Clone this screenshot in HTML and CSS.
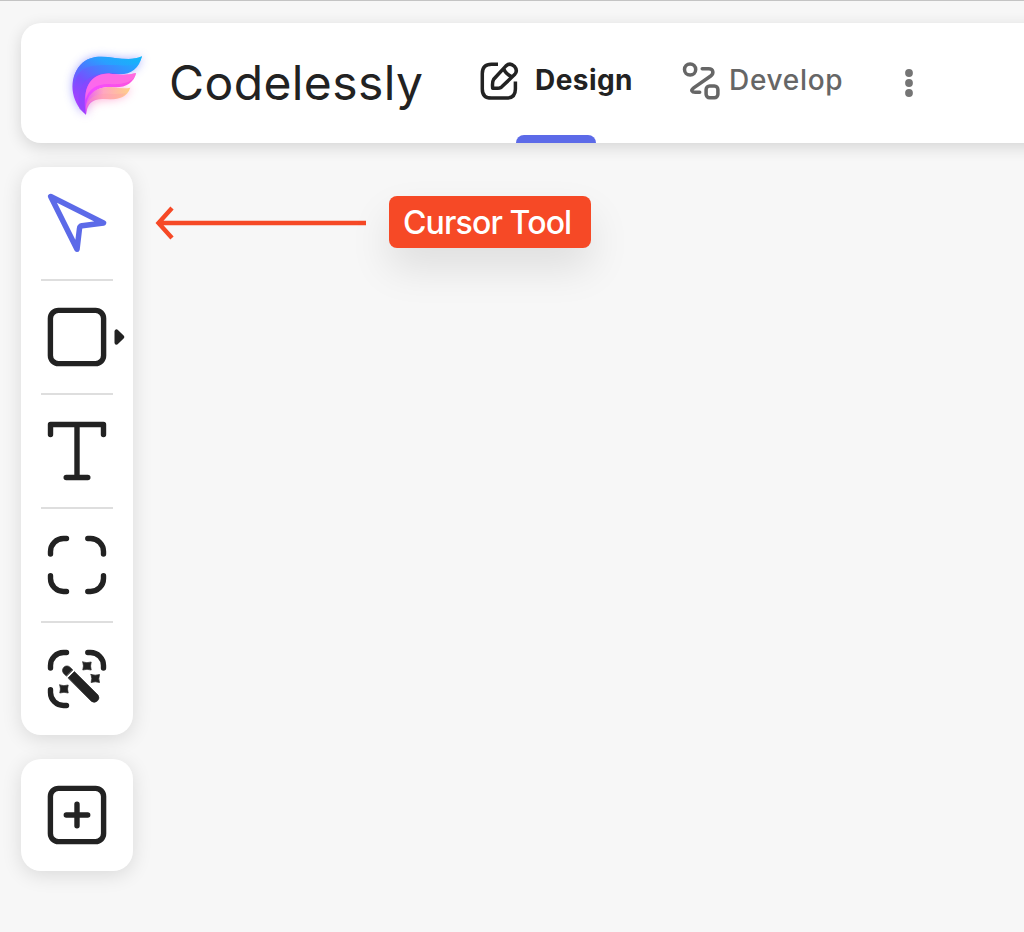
FILE: index.html
```html
<!DOCTYPE html>
<html lang="en">
<head>
<meta charset="utf-8">
<title>Codelessly</title>
<link rel="stylesheet" href="styles.css">
</head>
<body>
<header class="topbar">
  <svg class="logo" width="120" height="120" viewBox="0 0 360 360">
    <defs>
      <linearGradient id="blue" x1="0.9" y1="0" x2="0.1" y2="1"><stop offset="0" stop-color="#17b4ff"/><stop offset=".38" stop-color="#477cff"/><stop offset=".62" stop-color="#7650ff"/><stop offset="1" stop-color="#b83cff"/></linearGradient>
      <linearGradient id="sky" x1="0" y1="1" x2="1" y2="0"><stop offset="0" stop-color="#8a4cff"/><stop offset=".4" stop-color="#4b78ff"/><stop offset=".65" stop-color="#25a5ff"/><stop offset="1" stop-color="#12b8f5"/></linearGradient>
      <linearGradient id="pink" x1="0" y1="1" x2="1" y2="0"><stop offset="0" stop-color="#b941ff"/><stop offset=".4" stop-color="#f54dff"/><stop offset="1" stop-color="#ff54d4"/></linearGradient>
      <linearGradient id="peach" x1="0" y1="0" x2="1" y2="0"><stop offset="0" stop-color="#e75cf0"/><stop offset=".4" stop-color="#ffa7c0"/><stop offset="1" stop-color="#ffd088"/></linearGradient>
      <filter id="glow" x="-30%" y="-30%" width="160%" height="160%"><feGaussianBlur stdDeviation="14"/></filter>
    </defs>
    <g transform="translate(0 21)">
      <g filter="url(#glow)" opacity=".5">
        <path d="M108 254C60 215 55 145 91 105C139 51 220 106 276 79C267 116 244 133 210 133C160 130 110 150 108 254Z" fill="#5c60ff"/>
        <path d="M108 254C103 190 135 161 241 173C227 211 185 207 145 211Q115 219 108 254Z" fill="#ff67b0"/>
      </g>
      <path d="M108 254C60 215 55 145 91 105C139 51 220 106 276 79C267 116 244 133 210 133C160 130 110 150 108 254Z" fill="url(#blue)"/>
      <path d="M73 183C72 123 105 108 145 106C205 103 241 112 264 98Q274 90 276 79C220 106 139 51 91 105C71 128 66 155 73 183Z" fill="url(#sky)" opacity=".8"/>
      <path d="M88 236C80 184 96 145 142 134Q177 125 210 133C160 130 107 150 108 254Z" fill="#8d45ff" opacity=".55"/>
      <path d="M108 254C93 169 127 128 181 131Q229 138 258 129C252 161 221 176 184 171C133 169 112 198 108 254Z" fill="url(#pink)"/>
      <path d="M107 210C114 174 146 160 181 162C218 165 239 155 249 148Q257 139 258 129Q229 138 181 131C132 128 103 162 107 210Z" fill="#ff78e4" opacity=".65"/>
      <path d="M107 240C107 190 140 170 184 171Q219 177 241 173C229 206 202 209 165 207C127 205 112 220 108 254Z" fill="url(#peach)"/>
      <path d="M108 230C114 202 140 190 169 191Q207 194 228 190C208 211 185 208 162 207C127 205 113 216 108 239Z" fill="#ff9ea9" opacity=".35"/>
    </g>
  </svg>
  <span class="brand">Codelessly</span>
  <nav class="tabs">
    <a class="tab active">
      <svg class="tab-icon" width="40" height="40" viewBox="0 0 40 40" fill="none" stroke="#222" stroke-width="3.5">
        <path d="M18 3.3H11.5Q2.3 3.3 2.3 12.5V27.9Q2.3 37.1 11.5 37.1H26.2Q35.4 37.1 35.4 27.9V20.5"/>
        <path d="M26 4.9Q30 1.3 34.3 5.2Q38.2 9.7 34.6 13.6L21.5 26.1Q19.5 27.7 12.7 27.2Q12 20.7 13.7 18.2ZM23.5 7.7Q26 13.7 32 15.8" stroke-linejoin="round"/>
      </svg>
      <span class="label design">Design</span>
    </a>
    <a class="tab">
      <svg class="tab-icon" width="40" height="40" viewBox="0.8 0.5 40 40" fill="none" stroke="#666" stroke-width="3.5">
        <circle cx="8.9" cy="9" r="5.6"/>
        <path d="M21 8.2H27.5C32.2 8.2 33 12.8 29.5 15.5L12.5 27.3C9 30 10.8 31.8 14 31.8H18.5" stroke-linecap="round"/>
        <rect x="24.9" y="25.5" width="11.8" height="11.8" rx="3.5"/>
      </svg>
      <span class="label develop">Develop</span>
    </a>
  </nav>
  <svg class="more" width="10" height="32" viewBox="0 0 10 32" fill="#757575"><circle cx="5" cy="6" r="3.9"/><circle cx="5" cy="16" r="3.9"/><circle cx="5" cy="26" r="3.9"/></svg>
</header>
<main class="workspace">
  <aside class="sidebar">
    <div class="panel">
      <button class="tool" aria-label="Cursor"><svg class="icon selected" viewBox="0 0 64 64"><path d="M5.7 5.5L58.5 32L37 34.8Q34.8 35.2 34.5 37.5L32 58.3Z"/></svg></button>
      <button class="tool" aria-label="Rectangle"><svg class="icon" viewBox="0 0 64 64"><rect x="5.4" y="5.4" width="53.2" height="53.2" rx="8"/></svg>
        <svg class="expand" width="12" height="18" viewBox="0 0 12 18"><path d="M3.5 3.3V14.7L9.2 9Z"/></svg></button>
      <button class="tool" aria-label="Text"><svg class="icon" viewBox="0 0 64 64"><path d="M5.5 15.5V5.5H58.5V15.5M32 5.5V58.5M21.2 58.5H42.8"/></svg></button>
      <button class="tool" aria-label="Frame"><svg class="icon" viewBox="0 0 64 64"><path d="M5.5 21V18.5A13 13 0 0 1 18.5 5.5H21.5M42.8 5.5H45.5A13 13 0 0 1 58.5 18.5V21M5.5 42.8V45.5A13 13 0 0 0 18.5 58.5H21.5M42.8 58.5H45.5A13 13 0 0 0 58.5 45.5V42.8"/></svg></button>
      <button class="tool" aria-label="Magic frame"><svg class="icon" viewBox="0 0 64 64">
        <path d="M5.5 21V18.5A13 13 0 0 1 18.5 5.5H21.5M42.8 5.5H45.5A13 13 0 0 1 58.5 18.5V21M5.5 42.8V45.5A13 13 0 0 0 18.5 58.5H21.5"/>
        <path class="solid" d="M21.3 29L18.7 26.4A4.4 4.4 0 0 1 25.2 20.4L27.6 22.8ZM23.2 30.8L29.4 24.6L53 48A4.6 4.6 0 0 1 46.6 54.4Z"/>
        <path class="solid" d="M37.8 15Q42 16.4 46.2 15Q44.9 19 46.2 23Q42 21.6 37.8 23Q39.2 19 37.8 15ZM46.1 27.5Q50.3 28.9 54.5 27.5Q53.1 31.5 54.5 35.5Q50.3 34.1 46.1 35.5Q47.5 31.5 46.1 27.5ZM14.8 38Q19 39.4 23.2 38Q21.8 42 23.2 46Q19 44.6 14.8 46Q16.2 42 14.8 38Z"/>
      </svg></button>
    </div>
    <div class="panel">
      <button class="tool" aria-label="Add"><svg class="icon" viewBox="0 0 64 64"><rect x="5.4" y="5.4" width="53.2" height="53.2" rx="8"/><path d="M21.3 32H42.7M32 21.3V42.7"/></svg></button>
    </div>
  </aside>
  <div class="callout">
    <svg class="arrow" width="212" height="36" viewBox="0 0 212 36"><path d="M211 18H4M17 3L3.5 18L17 33"/></svg>
    <div class="tooltip"><span class="tip-text">Cursor Tool</span></div>
  </div>
</main>
</body>
</html>
```
FILE: styles.css
```css
* { box-sizing: border-box; }
body { margin: 0; height: 932px; overflow: hidden; background: #f7f7f7; border-top: 1px solid #c4c4c4; padding: 22px 0 0 21px; font-family: Inter, sans-serif; color: #222; }
.topbar { height: 120px; display: flex; background: #fff; border-radius: 20px 0 0 20px; margin-right: -40px; padding-left: 29px; box-shadow: 0 4px 16px rgba(0,0,0,.14); }
.logo { flex: none; }
.brand { width: 311px; margin-left: -1px; flex: none; line-height: 120px; font-size: 48px; font-weight: 400; letter-spacing: .4px; white-space: nowrap; }
.tabs { display: flex; flex: none; gap: 49px; }
.tab { height: 120px; display: flex; flex: none; position: relative; }
.tab-icon { flex: none; margin-top: 38px; }
.label { font-size: 28px; line-height: 34px; font-weight: 500; margin: 40px 0 0 15px; white-space: nowrap; }
.active::after { content: ""; position: absolute; bottom: 0; left: 36px; width: 80px; height: 8px; border-radius: 8px 8px 0 0; background: #5c6ae8; }
.design { font-weight: 650; width: 98px; letter-spacing: .45px; }
.develop { color: #666; font-weight: 550; margin-left: 7px; width: 116px; letter-spacing: .7px; }
.more { margin: 44px 0 0 59px; }
.workspace { display: flex; padding-top: 24px; gap: 23px; }
.sidebar { display: flex; flex-direction: column; width: 112px; gap: 24px; }
.panel { background: #fff; border-radius: 20px; box-shadow: 0 4px 20px rgba(0,0,0,.12); }
.tool { position: relative; display: flex; align-items: center; justify-content: center; width: 112px; height: 112px; border: 0; padding: 0; background: none; }
.tool + .tool { height: 114px; padding-top: 2px; }
.tool + .tool::before { content: ""; position: absolute; top: 0; left: 20px; width: 72px; height: 2px; background: #dedede; }
.icon { width: 64px; height: 64px; fill: none; stroke: #222; stroke-width: 5.4; stroke-linecap: round; stroke-linejoin: round; }
.selected { stroke: #5c6ae8; stroke-width: 5.5; }
.solid { fill: #222; stroke: #222; stroke-width: .7; }
.expand { position: absolute; left: 92px; top: 49px; fill: #222; stroke: #222; stroke-width: 4; stroke-linejoin: round; }
.callout { display: flex; padding-top: 29px; gap: 21px; }
.arrow { margin-top: 9px; margin-left: -1px; fill: none; stroke: #f64926; stroke-width: 4.4; }
.tooltip { width: 202px; height: 52px; margin-left: 1px; border-radius: 8px; background: #f64926; box-shadow: 0 20px 40px rgba(0,0,0,.1); padding-left: 14px; color: #fff; font-size: 32px; line-height: 53px; font-weight: 550; white-space: nowrap; }
.tip-text { letter-spacing: -.85px; }
```
